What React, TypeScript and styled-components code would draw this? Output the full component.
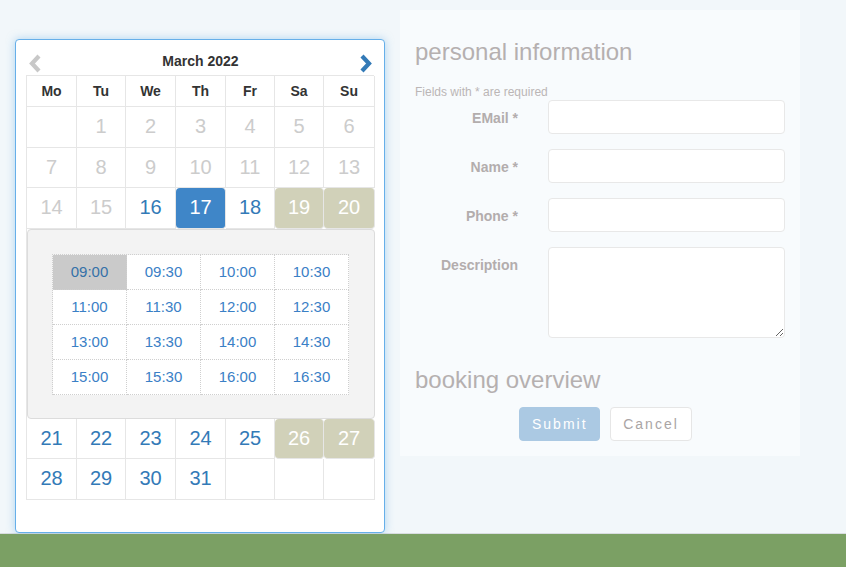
import React from "react";
import styled, { createGlobalStyle } from "styled-components";

const GlobalStyle = createGlobalStyle`
  html, body {
    margin: 0;
    padding: 0;
    background: #f2f7fa;
    font-family: "Liberation Sans", Arial, sans-serif;
    font-size: 14px;
    color: #333;
  }
  * { box-sizing: border-box; }
`;

const Page = styled.div`
  width: 846px;
  height: 567px;
  display: flex;
  flex-direction: column;
  overflow: hidden;
`;

const Main = styled.div`
  height: 534px;
  display: flex;
  align-items: flex-start;
  padding: 10px 0 0 15px;
  gap: 15px;
  border-bottom: 1px solid #d9dde0;
`;

const Footer = styled.div`
  flex: 1;
  background: #7ba064;
`;

const CalendarCard = styled.div`
  margin-top: 29px;
  width: 370px;
  height: 494px;
  background: #fff;
  border: 1px solid #66afe9;
  border-radius: 4px;
  box-shadow: 0 0 8px rgba(102, 175, 233, 0.5);
  padding: 10px 10px 0 10px;
`;

const CalHeader = styled.div`
  display: flex;
  align-items: center;
  justify-content: space-between;
  height: 25px;
  padding: 0 1px 0 2px;
`;

const Title = styled.div`
  font-weight: bold;
  font-size: 14px;
  color: #333;
  margin-top: -3px;
`;

const ArrowBtn = styled.span`
  display: flex;
  width: 14px;
  height: 19px;
  margin-top: 1px;
`;

const Grid = styled.div`
  width: 348px;
  display: grid;
  grid-template-columns: 50px 49px 50px 50px 49px 49px 51px;
  border-top: 1px solid #e6e6e6;
  border-left: 1px solid #e6e6e6;
`;

const HeadCell = styled.div`
  height: 31px;
  border-right: 1px solid #e6e6e6;
  border-bottom: 1px solid #e6e6e6;
  display: flex;
  align-items: center;
  justify-content: center;
  font-weight: bold;
  font-size: 14px;
  color: #333;
`;

type DayKind = "empty" | "past" | "open" | "selected" | "weekend";

const dayBg: Record<DayKind, string> = {
  empty: "transparent",
  past: "transparent",
  open: "transparent",
  selected: "#3f86c8",
  weekend: "#d1d1b9",
};
const dayColor: Record<DayKind, string> = {
  empty: "#ccc",
  past: "#cccccc",
  open: "#337ab7",
  selected: "#fff",
  weekend: "#fff",
};

const DayCell = styled.div<{ $kind: DayKind }>`
  height: 40.5px;
  border-right: 1px solid #e6e6e6;
  border-bottom: 1px solid #e6e6e6;
  display: flex;
  align-items: center;
  justify-content: center;
  font-size: 20px;
  color: ${(p) => dayColor[p.$kind]};
  background: ${(p) => dayBg[p.$kind]};
  border-radius: ${(p) => (p.$kind === "selected" || p.$kind === "weekend" ? "4px" : "0")};
`;

const PanelRow = styled.div`
  grid-column: 1 / -1;
  height: 190px;
  margin-left: -1px;
  display: flex;
`;

const TimePanel = styled.div`
  flex: 1;
  margin: 0 0 0 1px;
  background: #f3f3f3;
  border: 1px solid #dcdcdc;
  border-radius: 4px;
  padding: 24px 24px 0 24px;
`;

const TimeGrid = styled.div`
  display: grid;
  grid-template-columns: repeat(4, 74px);
  border-top: 1px dotted #cfcfcf;
  border-left: 1px dotted #cfcfcf;
  width: 297px;
`;

const TimeCell = styled.div<{ $active?: boolean }>`
  height: 35px;
  border-right: 1px dotted #cfcfcf;
  border-bottom: 1px dotted #cfcfcf;
  background: ${(p) => (p.$active ? "#cacaca" : "#fff")};
  color: ${(p) => (p.$active ? "#3571a8" : "#3a80c6")};
  font-size: 15px;
  display: flex;
  align-items: center;
  justify-content: center;
`;

const FormPanel = styled.div`
  width: 400px;
  height: 446px;
  background: #f8fbfd;
  padding: 29px 15px 0 15px;
`;

const Heading = styled.h3`
  margin: 0;
  font-size: 24px;
  font-weight: normal;
  line-height: 26.4px;
  color: #b5b0b0;
`;

const Note = styled.div`
  font-size: 12px;
  color: #bbb6b6;
  line-height: 16px;
  margin-top: 19px;
`;

const FormRow = styled.div`
  display: flex;
  margin-bottom: 15px;
`;

const Label = styled.label`
  width: 103px;
  text-align: right;
  font-weight: bold;
  font-size: 14px;
  color: #b3adad;
  padding-top: 10px;
  flex-shrink: 0;
`;

const Input = styled.input`
  margin-left: 30px;
  width: 237px;
  height: 34px;
  border: 1px solid #e8e8e8;
  border-radius: 4px;
  background: #fff;
  outline: none;
`;

const TextArea = styled.textarea`
  margin-left: 30px;
  width: 237px;
  height: 91px;
  border: 1px solid #e8e8e8;
  border-radius: 4px;
  background: #fff;
  outline: none;
  resize: both;
  display: block;
`;

const Heading2 = styled(Heading)`
  margin-top: 29px;
`;

const Buttons = styled.div`
  display: flex;
  gap: 10px;
  margin-top: 13px;
  padding-left: 104px;
`;

const Button = styled.button<{ $primary?: boolean }>`
  height: 34px;
  padding: 0 12px;
  border-radius: 4px;
  font-family: "Liberation Sans", Arial, sans-serif;
  font-size: 14px;
  letter-spacing: 2px;
  border: 1px solid ${(p) => (p.$primary ? "#abc9e3" : "#e6e6e6")};
  background: ${(p) => (p.$primary ? "#abc9e3" : "#fff")};
  color: ${(p) => (p.$primary ? "#fff" : "#aaa5a5")};
  width: ${(p) => (p.$primary ? "81px" : "82px")};
`;

const days: { n?: number; k: DayKind }[] = [
  { k: "empty" },
  ...[1, 2, 3, 4, 5, 6, 7, 8, 9, 10, 11, 12, 13, 14, 15].map((n) => ({ n, k: "past" as DayKind })),
  { n: 16, k: "open" },
  { n: 17, k: "selected" },
  { n: 18, k: "open" },
  { n: 19, k: "weekend" },
  { n: 20, k: "weekend" },
];
const daysAfter: { n?: number; k: DayKind }[] = [
  ...[21, 22, 23, 24, 25].map((n) => ({ n, k: "open" as DayKind })),
  { n: 26, k: "weekend" },
  { n: 27, k: "weekend" },
  ...[28, 29, 30, 31].map((n) => ({ n, k: "open" as DayKind })),
  { k: "empty" },
  { k: "empty" },
  { k: "empty" },
];

const times = [
  "09:00", "09:30", "10:00", "10:30",
  "11:00", "11:30", "12:00", "12:30",
  "13:00", "13:30", "14:00", "14:30",
  "15:00", "15:30", "16:00", "16:30",
];

const Chevron = ({ dir, color }: { dir: "left" | "right"; color: string }) => (
  <svg width="14" height="19" viewBox="0 0 14 19">
    {dir === "left" ? (
      <polyline points="11,2 4,9.5 11,17" fill="none" stroke={color} strokeWidth="4.2" />
    ) : (
      <polyline points="3,2 10,9.5 3,17" fill="none" stroke={color} strokeWidth="4.2" />
    )}
  </svg>
);

export default function App() {
  return (
    <Page>
      <GlobalStyle />
      <Main>
        <CalendarCard>
          <CalHeader>
            <ArrowBtn>
              <Chevron dir="left" color="#c8c8c8" />
            </ArrowBtn>
            <Title>March 2022</Title>
            <ArrowBtn>
              <Chevron dir="right" color="#337ab7" />
            </ArrowBtn>
          </CalHeader>
          <Grid>
            {["Mo", "Tu", "We", "Th", "Fr", "Sa", "Su"].map((d) => (
              <HeadCell key={d}>{d}</HeadCell>
            ))}
            {days.map((d, i) => (
              <DayCell key={"a" + i} $kind={d.k}>
                {d.n ?? ""}
              </DayCell>
            ))}
            <PanelRow>
              <TimePanel>
                <TimeGrid>
                  {times.map((t, i) => (
                    <TimeCell key={t} $active={i === 0}>
                      {t}
                    </TimeCell>
                  ))}
                </TimeGrid>
              </TimePanel>
            </PanelRow>
            {daysAfter.map((d, i) => (
              <DayCell key={"b" + i} $kind={d.k}>
                {d.n ?? ""}
              </DayCell>
            ))}
          </Grid>
        </CalendarCard>
        <FormPanel>
          <Heading>personal information</Heading>
          <Note>Fields with * are required</Note>
          <FormRow>
            <Label>EMail *</Label>
            <Input />
          </FormRow>
          <FormRow>
            <Label>Name *</Label>
            <Input />
          </FormRow>
          <FormRow>
            <Label>Phone *</Label>
            <Input />
          </FormRow>
          <FormRow>
            <Label>Description</Label>
            <TextArea />
          </FormRow>
          <Heading2>booking overview</Heading2>
          <Buttons>
            <Button $primary>Submit</Button>
            <Button>Cancel</Button>
          </Buttons>
        </FormPanel>
      </Main>
      <Footer />
    </Page>
  );
}
